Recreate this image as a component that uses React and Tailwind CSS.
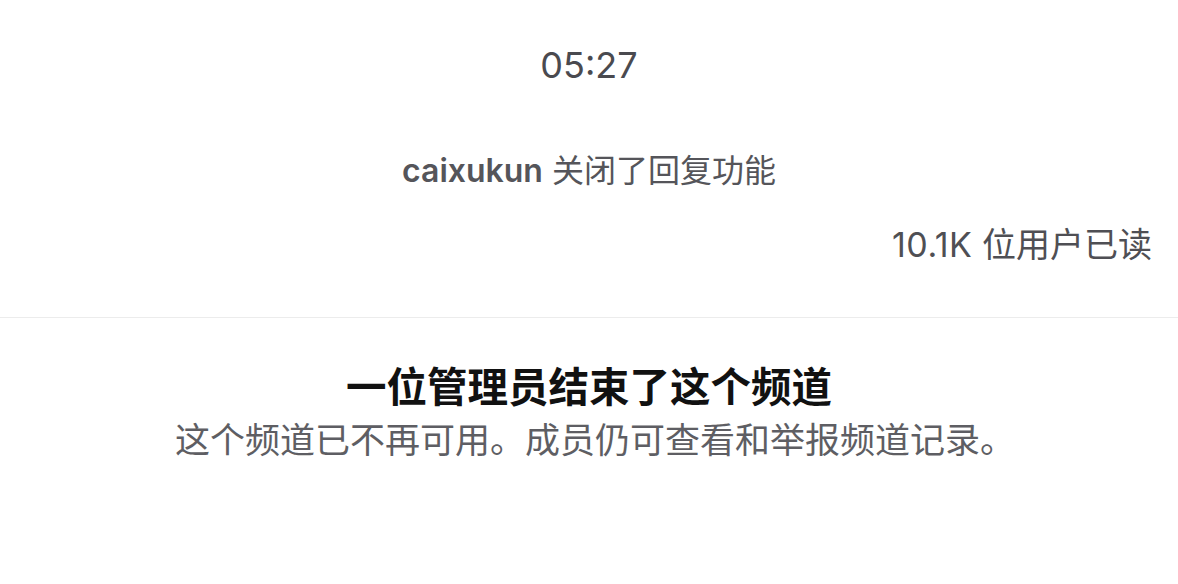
import React from "react";

const font = { fontFamily: 'Inter, "Noto Sans CJK SC", sans-serif' };

const ClosedChannel = () => {
  return (
    <div className="w-[1178px] h-[584px] bg-white flex flex-col" style={font}>
      <div className="pt-[43px] text-center text-[36px] leading-[44px] text-[#4a4a4f]">05:27</div>

      <div className="mt-[64px] text-center text-[32px] leading-[40px] text-[#55555a]">
        <span className="font-semibold">caixukun</span> 关闭了回复功能
      </div>

      <div className="mt-[34px] pr-[26px] text-right text-[34px] leading-[40px] text-[#4f4f54]">
        <span className="tracking-[0.5px]">10.1K</span>&nbsp;位用户已读
      </div>

      <div className="mt-[52px] h-px bg-[#ececec]" />

      <div className="mt-[46px] text-center text-[40.5px] leading-[48px] font-bold text-[#111]">
        一位管理员结束了这个频道
      </div>
      <div className="mt-[7px] pl-[12px] text-center text-[35px] leading-[42px] text-[#5e5e63]">
        这个频道已不再可用。成员仍可查看和举报频道记录。
      </div>
    </div>
  );
};

export default ClosedChannel;
